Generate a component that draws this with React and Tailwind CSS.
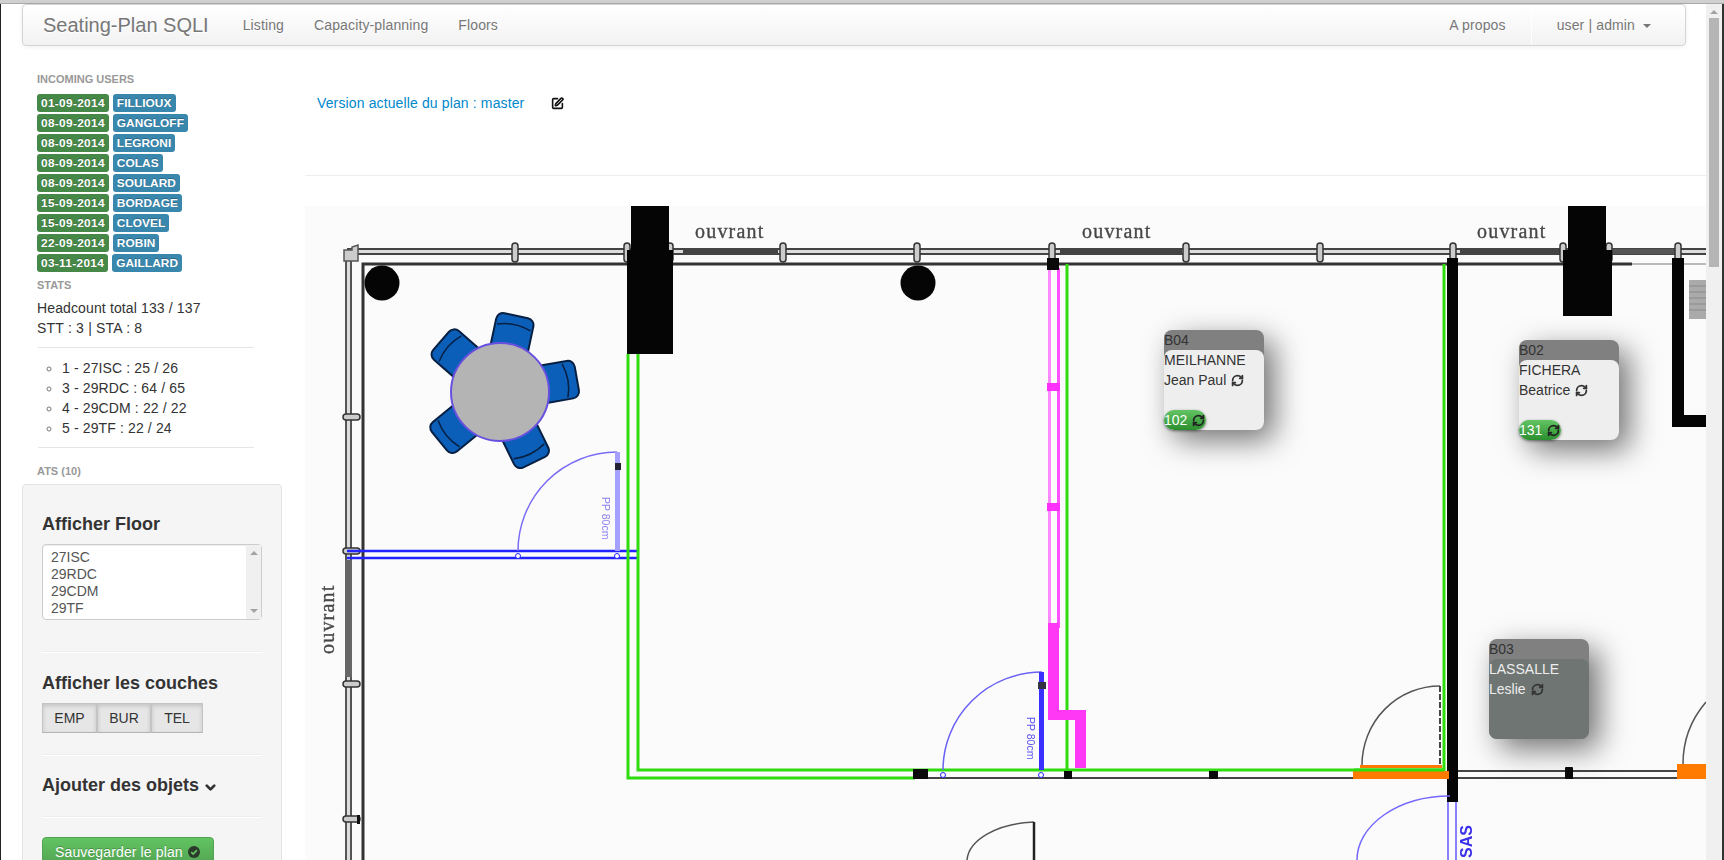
import { ChevronDown, RefreshCw, SquarePen } from 'lucide-react';

const incoming = [
    ['01-09-2014', 'FILLIOUX'],
    ['08-09-2014', 'GANGLOFF'],
    ['08-09-2014', 'LEGRONI'],
    ['08-09-2014', 'COLAS'],
    ['08-09-2014', 'SOULARD'],
    ['15-09-2014', 'BORDAGE'],
    ['15-09-2014', 'CLOVEL'],
    ['22-09-2014', 'ROBIN'],
    ['03-11-2014', 'GAILLARD'],
];

const floors = ['1 - 27ISC : 25 / 26', '3 - 29RDC : 64 / 65', '4 - 29CDM : 22 / 22', '5 - 29TF : 22 / 24'];

function Badge({ className, children }) {
    return (
        <span className={`inline-block h-[18px] rounded-[3px] px-1 py-0.5 text-[11.844px] leading-[14px] font-bold text-white [text-shadow:0_-1px_0_rgba(0,0,0,0.25)] ${className}`}>
            {children}
        </span>
    );
}

function NavHeader({ children, className = '' }) {
    return <div className={`h-5 text-[11px] leading-5 font-bold text-[#999] ${className}`}>{children}</div>;
}

function WellTitle({ children, className = '' }) {
    return <h4 className={`h-5 text-[18px] leading-5 font-bold text-[#333] ${className}`}>{children}</h4>;
}

function WellRule({ className = '' }) {
    return <div className={`h-px bg-[#eee] shadow-[0_1px_0_#fff] ${className}`} />;
}

function Seat({ className, code, name, first, office, dark }) {
    return (
        <div className={`absolute h-[100px] w-[100px] rounded-lg bg-[#808080] shadow-[10px_10px_30px_rgba(0,0,0,0.55)] ${className}`}>
            <div className="h-5 leading-5 text-[#333]">{code}</div>
            <div className={`relative h-20 rounded-lg leading-5 ${dark ? 'bg-[#6e7572] text-[#eee]' : 'bg-[#eee] text-[#333]'}`}>
                <div>{name}</div>
                <div className="flex items-center gap-[5px]">
                    {first}
                    <RefreshCw size={13} strokeWidth={3.25} className="text-[#333]" />
                </div>
                {office && (
                    <div className="absolute bottom-0 left-0 flex h-5 w-[42px] items-center gap-[5px] rounded-[10px] bg-gradient-to-b from-[#62c462] to-[#2a8f2f] text-white shadow-[0_1px_3px_rgba(0,0,0,0.5)]">
                        {office}
                        <RefreshCw size={13} strokeWidth={3.25} className="text-[#222]" />
                    </div>
                )}
            </div>
        </div>
    );
}

function FloorPlan() {
    const topPosts = [515, 627, 670, 783, 917, 1052, 1186, 1320, 1453, 1563, 1609, 1678];
    const sidePosts = [417, 551, 684, 819];
    const chairs = [12, 80, 154, 231, 311];

    return (
        <svg viewBox="305 206 1401 654" className="absolute inset-0 h-full w-full blur-[0.4px]">
            {/* outer facade */}
            <rect x="347" y="248" width="1359" height="7" fill="#444" />
            <rect x="352" y="250" width="1354" height="3" fill="#ddd" />
            <rect x="683" y="249" width="95" height="5" fill="#444" />
            <rect x="1060" y="249" width="122" height="5" fill="#444" />
            <rect x="1460" y="249" width="100" height="5" fill="#444" />
            <rect x="1612" y="249" width="64" height="5" fill="#555" />
            <rect x="345" y="252" width="7" height="608" fill="#555" />
            <rect x="347" y="254" width="3" height="606" fill="#ddd" />
            <rect x="345" y="560" width="7" height="117" fill="#666" />

            {/* inner walls */}
            <path d="M363 860V264H1632" fill="none" stroke="#333" strokeWidth="3" />
            <path d="M1632 264H1706" fill="none" stroke="#bbb" strokeWidth="2" />
            <path d="M915 778H1355M1458 771H1677M1458 778H1677" fill="none" stroke="#444" strokeWidth="2" />

            {topPosts.map((x) => (
                <rect key={x} x={x - 3} y="243" width="6" height="19" rx="3" fill="#ccc" stroke="#333" strokeWidth="1.5" />
            ))}
            {sidePosts.map((y) => (
                <rect key={y} x="343" y={y - 3} width="17" height="6" rx="3" fill="#ccc" stroke="#333" strokeWidth="1.5" />
            ))}
            <path d="M344 250H352V247L358 245V261H344Z" fill="#ccc" stroke="#555" strokeWidth="1.5" />
            <rect x="357" y="815" width="3" height="9" fill="#111" />

            {/* columns and pillars */}
            <circle cx="382" cy="283" r="17.5" fill="#050505" />
            <circle cx="918" cy="283" r="17.5" fill="#050505" />
            <path d="M631 206H669V250H673V354H627V250H631Z" fill="#050505" />
            <path d="M1568 206H1606V250H1612V316H1563V250H1568Z" fill="#050505" />
            <rect x="1447" y="258" width="11" height="544" fill="#050505" />
            <path d="M1672 258H1684V415H1706V427H1672Z" fill="#050505" />
            <rect x="1689" y="280" width="17" height="39" fill="#aaa" />
            <path d="M1689 286H1706M1689 292H1706M1689 298H1706M1689 304H1706M1689 310H1706" stroke="#8a8a8a" strokeWidth="1" />

            {/* round table */}
            {chairs.map((a) => (
                <g key={a} transform={`rotate(${a} 500 392)`}>
                    <rect x="481" y="314" width="38" height="42" rx="7" fill="#0b5fb8" stroke="#071f42" strokeWidth="2" />
                    <path d="M483 326Q500 320 517 326" fill="none" stroke="#071f42" strokeWidth="1.5" />
                </g>
            ))}
            <circle cx="500" cy="392" r="49" fill="#b4b4b4" stroke="#6a50e0" strokeWidth="2" />

            {/* blue partition + door */}
            <path d="M347 551H638M347 558H638" fill="none" stroke="#2222ff" strokeWidth="2.5" />
            <path d="M518 551A99 99 0 0 1 617 452" fill="none" stroke="#7a6cf5" strokeWidth="1.5" />
            <rect x="615" y="452" width="5" height="99" fill="#a4a0ff" />
            <rect x="615" y="463" width="6" height="7" fill="#223" />
            <circle cx="518" cy="556" r="2.5" fill="#fff" stroke="#2222ff" />
            <circle cx="617" cy="556" r="2.5" fill="#fff" stroke="#2222ff" />
            <text transform="translate(602 497) rotate(90)" fontFamily="'Liberation Sans', sans-serif" fontSize="10.5" fill="#8a80ef">PP 80cm</text>

            {/* green partitions */}
            <path d="M628 354V778H915" fill="none" stroke="#2fdc0e" strokeWidth="3" />
            <path d="M638 354V770H1444V264" fill="none" stroke="#2fdc0e" strokeWidth="3" />
            <path d="M1067 264V770" fill="none" stroke="#2fdc0e" strokeWidth="3" />

            {/* magenta partition */}
            <rect x="1048" y="268" width="3" height="360" fill="#ff88ff" />
            <rect x="1057" y="268" width="3" height="360" fill="#ff50ff" />
            <rect x="1047" y="383" width="13" height="8" fill="#ff30ff" />
            <rect x="1047" y="503" width="13" height="8" fill="#ff30ff" />
            <path d="M1048 623H1059V710H1086V768H1075V720H1048Z" fill="#ff38f5" />
            <rect x="1047" y="258" width="12" height="12" fill="#0a0a0a" />

            {/* door on lower wall */}
            <path d="M943 770A99 98 0 0 1 1042 672" fill="none" stroke="#6a60f5" strokeWidth="1.5" />
            <rect x="1039" y="672" width="5" height="98" fill="#3a30ff" />
            <rect x="1038" y="682" width="8" height="7" fill="#334" />
            <circle cx="943" cy="775" r="2.5" fill="#fff" stroke="#2222ff" />
            <circle cx="1041" cy="775" r="2.5" fill="#fff" stroke="#2222ff" />
            <text transform="translate(1027 717) rotate(90)" fontFamily="'Liberation Sans', sans-serif" fontSize="10.5" fill="#5a50ef">PP 80cm</text>
            <rect x="913" y="769" width="15" height="10" fill="#0a0a0a" />
            <rect x="1064" y="771" width="8" height="8" fill="#0a0a0a" />
            <rect x="1209" y="771" width="9" height="8" fill="#0a0a0a" />
            <rect x="1565" y="767" width="8" height="12" rx="1" fill="#0a0a0a" />

            {/* orange strips and grey doors */}
            <rect x="1353" y="771" width="96" height="8" fill="#ff7b00" />
            <rect x="1360" y="765" width="82" height="3" fill="#ff7b00" />
            <path d="M1354 770H1444" fill="none" stroke="#2fdc0e" strokeWidth="3" />
            <rect x="1677" y="764" width="29" height="15" fill="#ff7b00" />
            <path d="M1362 765A78 79 0 0 1 1440 686" fill="none" stroke="#555" strokeWidth="1.5" />
            <path d="M1440 686V765" fill="none" stroke="#444" strokeWidth="2" strokeDasharray="6 2" />
            <path d="M1683 764A95 95 0 0 1 1706 702" fill="none" stroke="#555" strokeWidth="1.5" />
            <path d="M967 860A72 40 0 0 1 1034 822" fill="none" stroke="#555" strokeWidth="1.5" />
            <path d="M1034 822V860" fill="none" stroke="#222" strokeWidth="2.5" />

            {/* SAS door */}
            <path d="M1357 860A93 64 0 0 1 1450 796" fill="none" stroke="#7468ff" strokeWidth="1.5" />
            <path d="M1448 802V860M1456 802V860" fill="none" stroke="#8a80ff" strokeWidth="2" />
            <text transform="translate(1472 858) rotate(-90)" fontFamily="'Liberation Sans', sans-serif" fontSize="16" fontWeight="700" fill="#3a30e8">SAS</text>

            {/* annotations */}
            <g fontFamily="'Liberation Serif', serif" fontSize="20" letterSpacing="1.2" fill="#444" stroke="#555" strokeWidth="0.4">
                <text x="695" y="238">ouvrant</text>
                <text x="1082" y="238">ouvrant</text>
                <text x="1477" y="238">ouvrant</text>
                <text transform="translate(334 654) rotate(-90)">ouvrant</text>
            </g>
        </svg>
    );
}

function Sidebar() {
    return (
        <aside className="w-[304px] shrink-0 pt-[23px] pl-9 text-[#333]">
            <NavHeader>INCOMING USERS</NavHeader>
            <div className="mt-[5px]">
                {incoming.map(([date, name], i) => (
                    <div key={i} className="flex h-5 gap-1">
                        <Badge className="bg-[#468847] tracking-[0.33px]">{date}</Badge>
                        <Badge className="bg-[#3a87ad] tracking-[0.1px]">{name}</Badge>
                    </div>
                ))}
            </div>
            <NavHeader className="mt-px">STATS</NavHeader>
            <div className="mt-[3px] tracking-[0.13px]">Headcount total 133 / 137</div>
            <div className="tracking-[0.2px]">STT : 3 | STA : 8</div>
            <div className="mt-[9px] ml-px h-px w-[216px] bg-[#e5e5e5]" />
            <ul className="mt-2.5 list-[circle] pl-[25px] tracking-[0.13px] marker:text-[#777]">
                {floors.map((f) => (
                    <li key={f} className="h-5">{f}</li>
                ))}
            </ul>
            <div className="mt-[9px] ml-px h-px w-[216px] bg-[#e5e5e5]" />
            <NavHeader className="mt-[13px]">ATS (10)</NavHeader>

            <div className="mt-[3px] -ml-[15px] h-[420px] w-[260px] rounded border border-[#e3e3e3] bg-[#f5f5f5] px-[19px] pt-[29px]">
                <WellTitle>Afficher Floor</WellTitle>
                <div className="relative mt-2.5 h-[76px] w-[220px] rounded border border-[#ccc] bg-white pt-[4px] pl-2 text-[#555] shadow-[inset_0_1px_1px_rgba(0,0,0,0.075)]">
                    {['27ISC', '29RDC', '29CDM', '29TF'].map((f) => (
                        <div key={f} className="h-[17px] leading-[17px]">{f}</div>
                    ))}
                    <div className="absolute top-0 right-0 bottom-0 flex w-[15px] flex-col items-center justify-between bg-[#f0f0f0] py-[6px]">
                        <div className="h-0 w-0 border-x-4 border-b-4 border-x-transparent border-b-[#a3a3a3]" />
                        <div className="h-0 w-0 border-x-4 border-t-4 border-x-transparent border-t-[#a3a3a3]" />
                    </div>
                </div>
                <WellRule className="mt-[31px]" />
                <WellTitle className="mt-[21px]">Afficher les couches</WellTitle>
                <div className="mt-2.5 flex h-[30px]">
                    {[['EMP', 'w-[55px]'], ['BUR', 'w-[54px]'], ['TEL', 'w-[52px]']].map(([t, w]) => (
                        <div key={t} className={`flex items-center justify-center border border-[#c4c4c4] border-b-[#b3b3b3] bg-[#e6e6e6] shadow-[inset_0_2px_4px_rgba(0,0,0,0.15)] ${w}`}>
                            {t}
                        </div>
                    ))}
                </div>
                <WellRule className="mt-[21px]" />
                <WellTitle className="mt-5 flex items-center gap-1">
                    Ajouter des objets
                    <ChevronDown size={15} strokeWidth={4.5} className="mt-1" />
                </WellTitle>
                <WellRule className="mt-[21px]" />
                <div className="mt-5 flex h-[30px] w-[172px] items-center gap-[5px] rounded-t border border-[#51a351] bg-gradient-to-b from-[#62c462] to-[#51a351] pl-3 tracking-[0.13px] text-white [text-shadow:0_-1px_0_rgba(0,0,0,0.25)]">
                    Sauvegarder le plan
                    <svg viewBox="0 0 12 12" className="h-3 w-3">
                        <circle cx="6" cy="6" r="6" fill="#2b3a2b" />
                        <path d="M3.2 6.2L5.2 8.1L8.9 4.2" fill="none" stroke="#62c462" strokeWidth="1.8" />
                    </svg>
                </div>
            </div>
        </aside>
    );
}

function Navbar() {
    return (
        <nav className="ml-[21px] flex h-[42px] w-[1664px] shrink-0 items-center rounded border border-[#d4d4d4] bg-gradient-to-b from-white to-[#f2f2f2] tracking-[0.13px] text-[#777] shadow-[0_1px_4px_rgba(0,0,0,0.065)] [text-shadow:0_1px_0_#fff]">
            <span className="ml-5 text-xl tracking-normal">Seating-Plan SQLI</span>
            <a className="ml-[34px]">Listing</a>
            <a className="ml-[30px]">Capacity-planning</a>
            <a className="ml-[30px]">Floors</a>
            <a className="ml-auto">A propos</a>
            <div className="ml-[25px] flex h-full items-center border-l border-white pl-[25px]">
                user | admin
                <span className="mt-px ml-2 h-0 w-0 border-x-4 border-t-4 border-x-transparent border-t-[#777]" />
                <span className="w-[34px]" />
            </div>
        </nav>
    );
}

export default function App() {
    return (
        <div className="flex h-[860px] w-[1724px] flex-col overflow-hidden bg-white font-['Liberation_Sans',sans-serif] text-sm leading-5">
            <div className="h-1 shrink-0 border-b border-[#aaa] bg-[#d0d0d0]" />
            <div className="flex min-h-0 flex-1">
                <div className="w-px shrink-0 bg-[#222]" />
                <div className="flex min-w-0 flex-1 flex-col">
                    <Navbar />
                    <div className="flex min-h-0 flex-1">
                        <Sidebar />
                        <main className="flex min-w-0 flex-1 flex-col pt-[47px]">
                            <div className="flex h-5 items-center pl-3 tracking-[0.13px] text-[#0088cc]">
                                Version actuelle du plan : master
                                <SquarePen size={13} strokeWidth={3} className="ml-[27px] text-[#111]" />
                            </div>
                            <div className="mt-[62px] h-px shrink-0 bg-[#eee]" />
                            <div className="relative mt-[30px] min-h-0 flex-1 overflow-hidden bg-[#fbfbfb]">
                                <FloorPlan />
                                <Seat className="top-[124px] left-[859px]" code="B04" name="MEILHANNE" first="Jean Paul" office="102" />
                                <Seat className="top-[134px] left-[1214px]" code="B02" name="FICHERA" first="Beatrice" office="131" />
                                <Seat className="top-[433px] left-[1184px]" code="B03" name="LASSALLE" first="Leslie" dark />
                            </div>
                        </main>
                    </div>
                </div>
                <div className="flex w-4 shrink-0 flex-col items-center bg-[#f0f0f0] pt-[6px]">
                    <div className="h-0 w-0 border-x-4 border-b-4 border-x-transparent border-b-[#a3a3a3]" />
                    <div className="mt-1 h-[249px] w-2.5 bg-[#b5b5b5]" />
                </div>
                <div className="w-0.5 shrink-0 bg-[#333]" />
            </div>
        </div>
    );
}
